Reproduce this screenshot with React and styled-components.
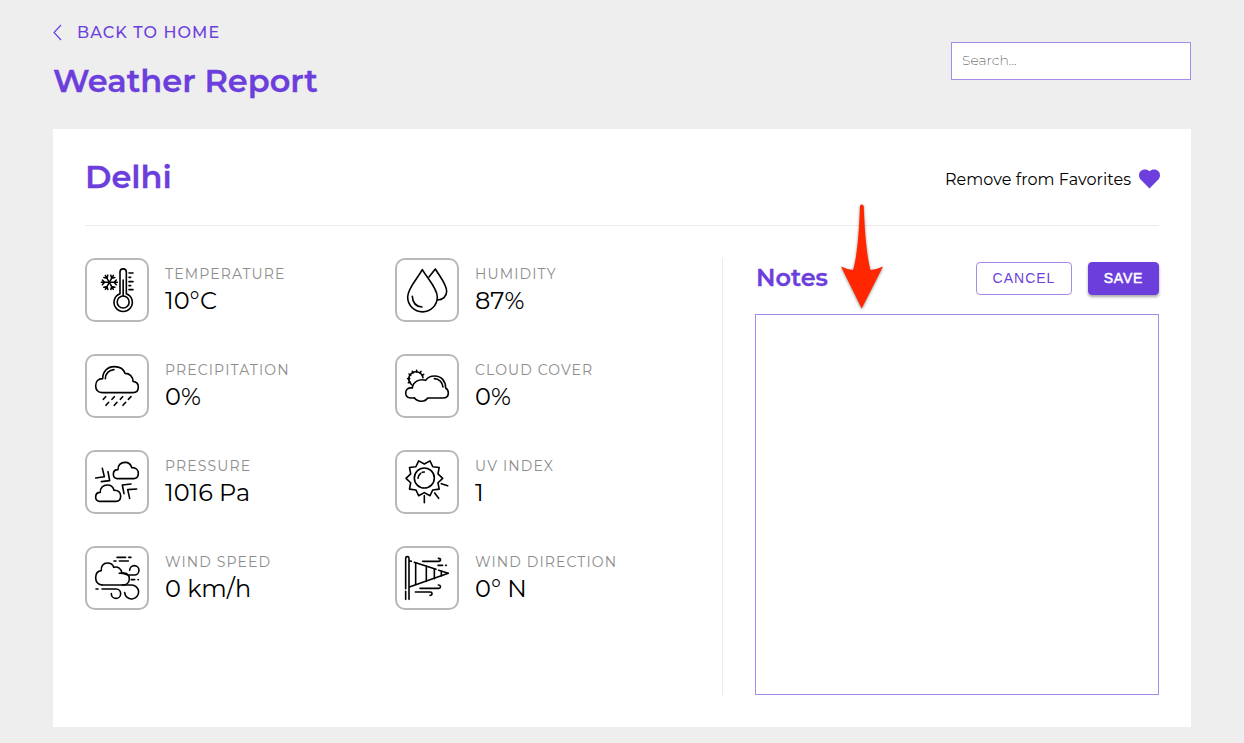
import React from "react";
import styled, { createGlobalStyle, css } from "styled-components";

const PURPLE = "#6c3fdc";
const PURPLE_LIGHT = "#a78bea";

const GlobalStyle = createGlobalStyle`
  *, *::before, *::after { box-sizing: border-box; }
  body { margin: 0; background: #eeeeee; color: #000; font-family: Montserrat, Inter, sans-serif; }
  h1, h2, h3, p, dl, dt, dd { margin: 0; }
`;

const Page = styled.div`
  min-height: 743px;
  padding: 20px 53px 16px;
`;

const Header = styled.header`
  display: flex;
  justify-content: space-between;
  height: 109px;
`;

const BackLink = styled.a`
  display: flex;
  align-items: center;
  gap: 14px;
  height: 24px;
  color: ${PURPLE};
  font-size: 16px;
  font-weight: 500;
  letter-spacing: 1.08px;
  white-space: nowrap;
`;

const PageTitle = styled.h1`
  margin-top: 17px;
  color: ${PURPLE};
  font-size: 32px;
  font-weight: 600;
  line-height: 40px;
  white-space: nowrap;
  -webkit-text-stroke: 0.3px ${PURPLE};
`;

const Search = styled.input`
  width: 240px;
  height: 38px;
  margin-top: 22px;
  padding: 0 10px 2px;
  border: 1px solid ${PURPLE_LIGHT};
  border-radius: 0;
  background: #fff;
  font: 200 14px Montserrat, Inter, sans-serif;
  outline: none;
  &::placeholder { color: #444; opacity: 1; }
`;

const Card = styled.main`
  height: 598px;
  padding: 0 32px 32px;
  background: #fff;
`;

const CardHeader = styled.div`
  display: flex;
  align-items: center;
  justify-content: space-between;
  height: 97px;
  border-bottom: 1px solid #ebebeb;
`;

const City = styled.h2`
  margin-bottom: 1px;
  color: ${PURPLE};
  font-size: 32px;
  font-weight: 600;
  line-height: 40px;
  -webkit-text-stroke: 0.3px ${PURPLE};
`;

const Favorite = styled.div`
  display: flex;
  align-items: center;
  gap: 8px;
  margin: 4px -1px 0 0;
  font-size: 16px;
  letter-spacing: 0.06px;
  white-space: nowrap;
`;

const CardBody = styled.div`
  display: flex;
  height: 437px;
  margin-top: 32px;
`;

const Metrics = styled.section`
  display: grid;
  grid-template-columns: 310px 1fr;
  grid-auto-rows: 64px;
  row-gap: 32px;
  width: 637px;
`;

const Metric = styled.dl`
  display: flex;
  gap: 16px;
`;

const IconFrame = styled.div`
  width: 64px;
  height: 64px;
  border: 2px solid #b8b8b8;
  border-radius: 10px;
  svg { display: block; }
`;

const MetricLabel = styled.dt`
  margin-top: 7px;
  color: #8d8d8d;
  font-size: 14px;
  line-height: 18px;
  letter-spacing: 1.12px;
  white-space: nowrap;
`;

const MetricValue = styled.dd`
  margin-top: 3px;
  font-size: 24px;
  line-height: 30px;
  white-space: nowrap;
`;

const Notes = styled.section`
  display: flex;
  flex-direction: column;
  flex: 1;
  padding-left: 32px;
  border-left: 1px solid #ebebeb;
`;

const NotesHeader = styled.div`
  display: flex;
  align-items: center;
  gap: 16px;
  height: 40px;
  margin-bottom: 16px;
  padding-left: 1px;
`;

const NotesTitle = styled.h3`
  flex: 1;
  color: ${PURPLE};
  font-size: 24px;
  font-weight: 600;
  line-height: 30px;
  -webkit-text-stroke: 0.3px ${PURPLE};
`;

const Button = styled.button`
  width: ${(p) => (p.$filled ? 71 : 96)}px;
  height: 33px;
  padding: 0;
  border: 1px solid ${PURPLE_LIGHT};
  border-radius: 4px;
  background: #fff;
  color: ${PURPLE};
  font: 400 14px "Liberation Sans", Arial, sans-serif;
  letter-spacing: 1px;
  ${(p) =>
    p.$filled &&
    css`
      border-color: ${PURPLE};
      background: ${PURPLE};
      color: #fff;
      letter-spacing: 0.8px;
      -webkit-text-stroke: 0.5px #fff;
      box-shadow: 0 2px 3px rgba(0, 0, 0, 0.35);
    `}
`;

const NotesArea = styled.textarea`
  flex: 1;
  width: 100%;
  border: 1px solid ${PURPLE_LIGHT};
  border-radius: 0;
  background: #fff;
  resize: none;
  outline: none;
`;

const Pointer = styled.svg`
  position: absolute;
  left: 836px;
  top: 200px;
  filter: drop-shadow(0 1px 1.5px rgba(0, 0, 0, 0.45));
`;

const starPoints = Array.from({ length: 20 }, (_, i) => {
  const r = i % 2 ? 43 : 55;
  const a = ((i * 18 + 18) * Math.PI) / 180;
  return `${(112 + r * Math.sin(a)).toFixed(1)},${(109 - r * Math.cos(a)).toFixed(1)}`;
}).join(" ");

const smallCloud =
  "M120 110C112 109 109 104 109 97C109 89 114 83 123 83C122 70 131 61 144 61C155 61 162 68 164 77C176 76 184 83 184 94C184 103 179 110 170 110Z";

const icons = {
  temperature: (
    <>
      <path d="M129 131V66a9.500 9.500 0 0 1 19 0V131A27.500 27.500 0 1 1 129 131Z" />
      <circle cx="138.500" cy="156" r="18" />
      <path d="M138.500 90V137M156 69h12M156 82h5M156 95h12M156 107h5M156 119h12" />
      {[0, 60, 120, 180, 240, 300].map((a) => (
        <path key={a} strokeWidth="4.500" transform={`rotate(${a} 97 97)`} d="M97 97H121M111 97L118 90M111 97L118 104" />
      ))}
    </>
  ),
  humidity: (
    <>
      <path d="M106 59C92 85 62 114 62 141A44 44 0 0 0 151 141C151 114 121 85 106 59Z" />
      <path d="M126 81L145 57C160 82 179 103 179 124C179 140 167 150 151 150M76 139C77 158 88 170 105 171" />
    </>
  ),
  precipitation: (
    <>
      <path d="M76 140C62 139 56 130 56 119C56 107 64 98 77 98C77 76 92 62 112 62C128 62 140 70 144 82C158 82 168 92 168 106C178 107 184 114 184 123C184 133 178 140 168 140Z" />
      <path d="M85 98C85 83 96 72 111 71M86 152l-7 8M112 152l-7 8M137 152l-7 8M162 152l-8 8M95 169l-8 9M120 169l-8 9M146 169l-8 9" />
    </>
  ),
  cloud: (
    <>
      <path d="M82 155C63 159 56 151 56 141C56 130 64 124 76 126C78 108 96 97 116 103C122 93 132 90 143 90C163 90 176 105 176 126C182 130 184 134 184 141C184 150 178 156 168 156H122C114 169 92 169 82 155Z" />
      <path d="M142 98C156 98 167 109 168 123M74 116A21.500 21.500 0 1 1 108 95" />
      <path d="M89 78V73M78 81L76 76M71 88L66 84M68 98H62M70 108L64 110M99 81L102 76M106 88L110 85" />
    </>
  ),
  pressure: (
    <>
      <path d={smallCloud} />
      <path d={smallCloud} transform="translate(-53 68)" />
      <path d="M76 79L82 104L56 108M93 89L98 116L73 119M162 126L136 129L141 155M179 141L152 143L158 169" />
    </>
  ),
  uv: (
    <>
      <polygon points={starPoints} />
      <circle cx="112" cy="108" r="30" />
      <path d="M93 109C93 102 97 97 101 94M106 91L112 90M112 161V182M143 153L155 169M163 125L182 131" />
    </>
  ),
  wind: (
    <>
      <path d="M75 141C62 139 56 131 56 119C56 107 62 99 73 98C71 84 80 75 91 75C101 75 108 80 110 88C122 84 134 92 135 106C148 103 157 111 157 122C157 134 148 141 136 141" />
      <path d="M127 106C142 103 144 111 155 111H172A14 14 0 1 0 158 97M75 141H163A21 21 0 1 1 143 164M75 153H117A14 14 0 1 1 103 167" />
      <path d="M57 153h6M120 58h26M155 58h7M111 69h6M127 69h27M163 125h10M183 125h1" />
    </>
  ),
  direction: (
    <>
      <path d="M56 152V61a5 5 0 0 1 10 0V184M56 160V184M66 68L73 70M82 73L147 94M155 97L184 106L67 147" />
      <path d="M86 75V139M118 85V130M142 93V122M163 99V114" />
      <path d="M107 70H155C162 70 163 61 154 61M153 82H167M176 82h2M99 151H154C162 151 163 141 154 141M85 162H129C137 162 137 172 129 172" />
    </>
  ),
};

const metrics = [
  { icon: "temperature", label: "TEMPERATURE", value: "10°C" },
  { icon: "humidity", label: "HUMIDITY", value: "87%" },
  { icon: "precipitation", label: "PRECIPITATION", value: "0%" },
  { icon: "cloud", label: "CLOUD COVER", value: "0%" },
  { icon: "pressure", label: "PRESSURE", value: "1016 Pa" },
  { icon: "uv", label: "UV INDEX", value: "1" },
  { icon: "wind", label: "WIND SPEED", value: "0 km/h" },
  { icon: "direction", label: "WIND DIRECTION", value: "0° N" },
];

function MetricIcon({ name }) {
  return (
    <IconFrame>
      <svg width="60" height="60" viewBox="30 30 180 180" fill="none" stroke="#000" strokeWidth="4.8" strokeLinecap="round" strokeLinejoin="round">
        {icons[name]}
      </svg>
    </IconFrame>
  );
}

export default function App() {
  return (
    <Page>
      <GlobalStyle />
      <Header>
        <div>
          <BackLink>
            <svg width="10" height="18" viewBox="0 0 10 18" fill="none" stroke={PURPLE} strokeWidth="1.2">
              <path d="M8 2L1 9.500L8 17" />
            </svg>
            BACK TO HOME
          </BackLink>
          <PageTitle>Weather Report</PageTitle>
        </div>
        <Search placeholder="Search..." />
      </Header>
      <Card>
        <CardHeader>
          <City>Delhi</City>
          <Favorite>
            Remove from Favorites
            <svg width="21" height="20" viewBox="0 0 21 20" fill={PURPLE}>
              <path d="M10.500 19.500L1.600 10.500C-0.500 8.300-0.500 4.300 1.600 2.200C4-0.200 8-0.100 10.500 2.200C13-0.100 17-0.200 19.400 2.200C21.500 4.300 21.500 8.300 19.400 10.500Z" />
            </svg>
          </Favorite>
        </CardHeader>
        <CardBody>
          <Metrics>
            {metrics.map((m) => (
              <Metric key={m.label}>
                <MetricIcon name={m.icon} />
                <div>
                  <MetricLabel>{m.label}</MetricLabel>
                  <MetricValue>{m.value}</MetricValue>
                </div>
              </Metric>
            ))}
          </Metrics>
          <Notes>
            <NotesHeader>
              <NotesTitle>Notes</NotesTitle>
              <Button>CANCEL</Button>
              <Button $filled>SAVE</Button>
            </NotesHeader>
            <NotesArea />
          </Notes>
        </CardBody>
      </Card>
      <Pointer width="52" height="114" viewBox="836 200 52 114">
        <path fill="#ff2600" d="M860 206Q861.800 203.200 863.700 206C864.500 228 866.500 256 870.500 270Q877 269.500 883 266.500L861.700 308.500L841 266.500Q847 269.500 853 270C857.500 256 859.300 228 860 206Z" />
      </Pointer>
    </Page>
  );
}
